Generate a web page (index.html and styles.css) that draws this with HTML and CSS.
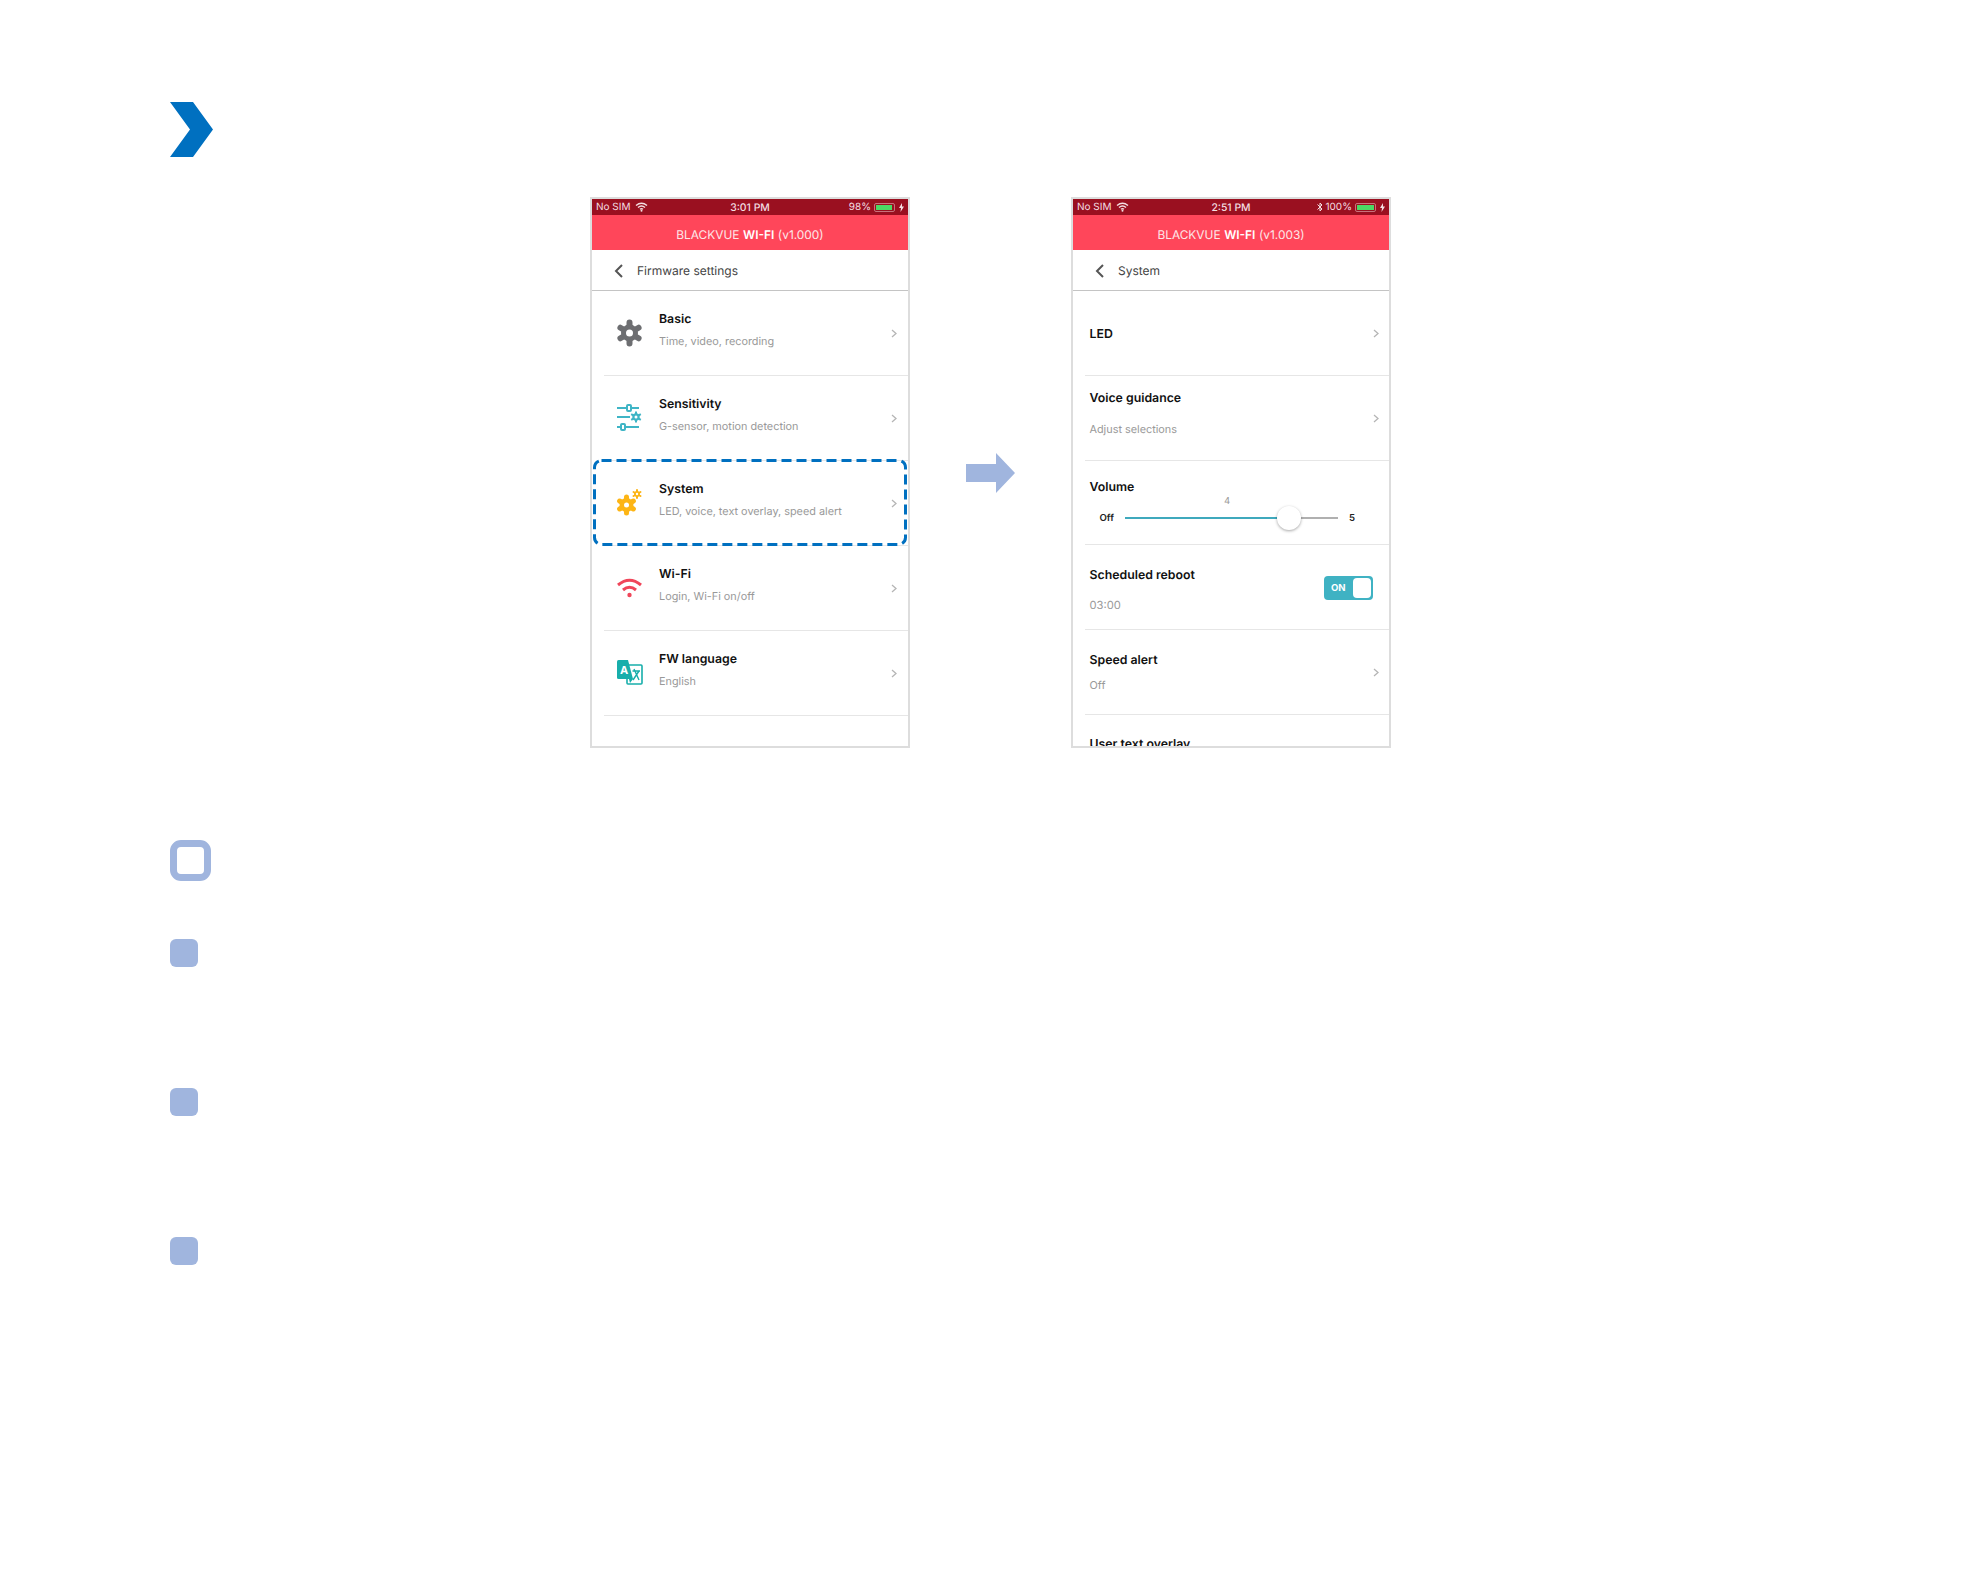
FILE: index.html
```html
<!DOCTYPE html>
<html>
 <head>
  <title>Firmware settings</title><meta charset="utf-8">
  <link rel="stylesheet" href="styles.css">
 </head>
 <body>
  <div class="page">
    <svg class="step-mark" width="43" height="55" viewBox="0 0 43 55"><path d="M0 0H23L43 27.500L23 55H0L20 27.500Z" fill="#0070c0"/></svg>

    <div class="compare">
      <div class="phone">
        <div class="status">
          <div class="status-side">
            <span>No SIM</span>
            <svg width="13" height="10" viewBox="0 0 13 10"><path d="M1 3.500Q6.500 -1 12 3.500M3 5.500Q6.500 2.500 10 5.500M5 7.300Q6.500 6 8 7.300" fill="none" stroke="#f4dfe2" stroke-width="1.400"/><circle cx="6.500" cy="8.800" r="1" fill="#f4dfe2"/></svg>
          </div>
          <span class="status-time">3:01 PM</span>
          <div class="status-side status-right">
            <span>98%</span>
            <div class="battery"><div class="battery-level level-98"></div></div>
            <svg width="5" height="9" viewBox="0 0 5 9"><path d="M3 0L0 5H2L1.500 9L5 3.500H3Z" fill="#f4dfe2"/></svg>
          </div>
        </div>
        <div class="app-title">BLACKVUE <b>WI-FI</b> (v1.000)</div>
        <div class="nav">
          <svg width="9" height="14" viewBox="0 0 9 14"><path d="M8 1L2 7L8 13" fill="none" stroke="#555" stroke-width="2"/></svg>
          <span>Firmware settings</span>
        </div>

        <div class="row menu-row">
          <svg class="row-icon" width="27" height="28" viewBox="0 0 27 28">
            <g stroke="#6d6e71" stroke-width="6" stroke-linecap="round"><path d="M13.500 3.500V24.500M4.400 8.750L22.600 19.250M4.400 19.250L22.600 8.750"/></g>
            <circle cx="13.500" cy="14" r="8.500" fill="#6d6e71"/><circle cx="13.500" cy="14" r="3.500" fill="#fff"/>
          </svg>
          <div class="row-text"><div class="row-title">Basic</div><div class="row-sub">Time, video, recording</div></div>
          <svg class="row-arrow" width="6" height="9" viewBox="0 0 6 9"><path d="M1 1L5 4.500L1 8" fill="none" stroke="#b5b5b5" stroke-width="1.300"/></svg>
        </div>
        <div class="row menu-row">
          <svg class="row-icon" width="27" height="28" viewBox="0 0 27 28">
            <g stroke="#3fb5c6" stroke-width="2" fill="#fff">
              <path d="M1 4H23M1 13H14M1 23H23"/>
              <rect x="11" y="1" width="4" height="6" rx="1"/><rect x="5" y="20" width="4" height="6" rx="1"/>
            </g>
            <g stroke="#3fb5c6" stroke-width="2"><path d="M20 7.500V18.500M15.200 10.200L24.800 15.800M15.200 15.800L24.800 10.200"/></g>
            <circle cx="20" cy="13" r="3.700" fill="#3fb5c6"/><circle cx="20" cy="13" r="1.500" fill="#fff"/>
          </svg>
          <div class="row-text"><div class="row-title">Sensitivity</div><div class="row-sub">G-sensor, motion detection</div></div>
          <svg class="row-arrow" width="6" height="9" viewBox="0 0 6 9"><path d="M1 1L5 4.500L1 8" fill="none" stroke="#b5b5b5" stroke-width="1.300"/></svg>
        </div>
        <div class="row menu-row">
          <svg class="row-icon" width="27" height="28" viewBox="0 0 27 28">
            <g stroke="#fdb515" stroke-width="5" stroke-linecap="round"><path d="M10.500 8V24M3.600 12L17.400 20M3.600 20L17.400 12"/></g>
            <circle cx="10.500" cy="16" r="7" fill="#fdb515"/><circle cx="10.500" cy="16" r="2.500" fill="#fff"/>
            <g stroke="#fdb515" stroke-width="2" stroke-linecap="round"><path d="M21 1V9M17.500 3L24.500 7M17.500 7L24.500 3"/></g>
            <circle cx="21" cy="5" r="3" fill="#fdb515"/><circle cx="21" cy="5" r="1.200" fill="#fff"/>
          </svg>
          <div class="row-text"><div class="row-title">System</div><div class="row-sub">LED, voice, text overlay, speed alert</div></div>
          <svg class="row-arrow" width="6" height="9" viewBox="0 0 6 9"><path d="M1 1L5 4.500L1 8" fill="none" stroke="#b5b5b5" stroke-width="1.300"/></svg>
          <svg class="highlight" width="314" height="87" viewBox="0 0 314 87"><rect x="1.500" y="1.500" width="311" height="84" rx="7" fill="none" stroke="#0070c0" stroke-width="3" stroke-dasharray="10 5"/></svg>
        </div>
        <div class="row menu-row">
          <svg class="row-icon" width="27" height="28" viewBox="0 0 27 28">
            <path d="M2 11Q13.500 1.500 25 11M7 16Q13.500 10.500 20 16" fill="none" stroke="#f0465a" stroke-width="3"/>
            <circle cx="13.500" cy="21" r="2.200" fill="#f0465a"/>
          </svg>
          <div class="row-text"><div class="row-title">Wi-Fi</div><div class="row-sub">Login, Wi-Fi on/off</div></div>
          <svg class="row-arrow" width="6" height="9" viewBox="0 0 6 9"><path d="M1 1L5 4.500L1 8" fill="none" stroke="#b5b5b5" stroke-width="1.300"/></svg>
        </div>
        <div class="row menu-row">
          <svg class="row-icon" width="27" height="28" viewBox="0 0 27 28">
            <rect x="11" y="6" width="15" height="19" rx="1" fill="#fff" stroke="#17aeab" stroke-width="1.600"/>
            <path d="M1 2.500Q1 1 2.500 1H12L17 20H2.500Q1 20 1 18.500Z" fill="#17aeab"/>
            <path d="M13 20L17 20L14 24Z" fill="#17aeab"/>
            <text class="icon-letter" x="4" y="15">A</text>
            <path d="M18 10L23 21M23 12L17 21M16.500 12H24" fill="none" stroke="#17aeab" stroke-width="1.400"/>
          </svg>
          <div class="row-text"><div class="row-title">FW language</div><div class="row-sub">English</div></div>
          <svg class="row-arrow" width="6" height="9" viewBox="0 0 6 9"><path d="M1 1L5 4.500L1 8" fill="none" stroke="#b5b5b5" stroke-width="1.300"/></svg>
        </div>
      </div>

      <svg class="flow-arrow" width="49" height="40" viewBox="0 0 49 40"><path d="M0 11H30V0L49 20L30 40V29H0Z" fill="#a0b5de"/></svg>

      <div class="phone">
        <div class="status">
          <div class="status-side">
            <span>No SIM</span>
            <svg width="13" height="10" viewBox="0 0 13 10"><path d="M1 3.500Q6.500 -1 12 3.500M3 5.500Q6.500 2.500 10 5.500M5 7.300Q6.500 6 8 7.300" fill="none" stroke="#f4dfe2" stroke-width="1.400"/><circle cx="6.500" cy="8.800" r="1" fill="#f4dfe2"/></svg>
          </div>
          <span class="status-time">2:51 PM</span>
          <div class="status-side status-right">
            <svg width="6" height="10" viewBox="0 0 6 10"><path d="M0.500 2.500L5 7L3 9V1L5 3L0.500 7.500" fill="none" stroke="#f4dfe2" stroke-width="1"/></svg>
            <span>100%</span>
            <div class="battery"><div class="battery-level level-100"></div></div>
            <svg width="5" height="9" viewBox="0 0 5 9"><path d="M3 0L0 5H2L1.500 9L5 3.500H3Z" fill="#f4dfe2"/></svg>
          </div>
        </div>
        <div class="app-title">BLACKVUE <b>WI-FI</b> (v1.003)</div>
        <div class="nav">
          <svg width="9" height="14" viewBox="0 0 9 14"><path d="M8 1L2 7L8 13" fill="none" stroke="#555" stroke-width="2"/></svg>
          <span>System</span>
        </div>

        <div class="row setting-row">
          <div class="row-text led"><div class="row-title">LED</div></div>
          <svg class="row-arrow" width="6" height="9" viewBox="0 0 6 9"><path d="M1 1L5 4.500L1 8" fill="none" stroke="#b5b5b5" stroke-width="1.300"/></svg>
        </div>
        <div class="row setting-row">
          <div class="row-text voice"><div class="row-title">Voice guidance</div><div class="row-sub">Adjust selections</div></div>
          <svg class="row-arrow" width="6" height="9" viewBox="0 0 6 9"><path d="M1 1L5 4.500L1 8" fill="none" stroke="#b5b5b5" stroke-width="1.300"/></svg>
        </div>
        <div class="row setting-row short">
          <div class="row-text volume">
            <div class="row-title">Volume</div>
            <div class="slider">
              <span class="slider-end">Off</span>
              <div class="slider-track">
                <div class="slider-fill" style="width: 164px"></div>
                <div class="slider-value">4</div>
                <div class="slider-thumb"></div>
              </div>
              <span class="slider-end">5</span>
            </div>
          </div>
        </div>
        <div class="row setting-row">
          <div class="row-text reboot"><div class="row-title">Scheduled reboot</div><div class="row-sub">03:00</div></div>
          <div class="toggle"><span>ON</span><div class="toggle-knob"></div></div>
        </div>
        <div class="row setting-row">
          <div class="row-text speed"><div class="row-title">Speed alert</div><div class="row-sub">Off</div></div>
          <svg class="row-arrow" width="6" height="9" viewBox="0 0 6 9"><path d="M1 1L5 4.500L1 8" fill="none" stroke="#b5b5b5" stroke-width="1.300"/></svg>
        </div>
        <div class="row setting-row">
          <div class="row-text overlay"><div class="row-title">User text overlay</div></div>
        </div>
      </div>
    </div>

    <div class="note-box"></div>
    <div class="bullets">
      <div class="bullet"></div>
      <div class="bullet"></div>
      <div class="bullet"></div>
    </div>
  </div>
 </body>
</html>
```

FILE: styles.css
```css
body {
  margin: 0;
  background-color: #fff;
  font-family: "Inter", "Liberation Sans", sans-serif;
  text-rendering: geometricPrecision;
}

.page {
  height: 1587px;
  box-sizing: border-box;
  padding: 102px 0 0 170px;
}

.step-mark {
  display: block;
}

.compare {
  display: flex;
  align-items: center;
  margin: 40px 0 0 420px;
}

.flow-arrow {
  margin: 0 56px;
}

.phone {
  width: 320px;
  height: 551px;
  box-sizing: border-box;
  border: 2px solid #ddd;
  overflow: hidden;
}

.status {
  height: 16px;
  padding: 0 4px;
  display: flex;
  align-items: center;
  justify-content: space-between;
  background-color: #9a1020;
  color: #f4dfe2;
  font-size: 10px;
  position: relative;
}

.status-side {
  display: flex;
  align-items: center;
  gap: 5px;
}

.status-right {
  gap: 2px;
}

.status-time {
  position: absolute;
  left: 0;
  right: 0;
  text-align: center;
  font-size: 10.400px;
  font-weight: 500;
}

.battery {
  width: 21px;
  height: 9px;
  box-sizing: border-box;
  margin: 0 2px 0 1px;
  border: 1px solid #c9717b;
  border-radius: 2px;
  padding: 1px;
}

.battery-level {
  height: 100%;
  background-color: #4cd964;
}

.level-98 {
  width: 96%;
}

.level-100 {
  width: 100%;
}

.app-title {
  height: 35px;
  box-sizing: border-box;
  padding-top: 3px;
  display: flex;
  align-items: center;
  justify-content: center;
  gap: 0.3em;
  background-color: #ff465a;
  color: #fde6e8;
  font-size: 11.900px;
}

.app-title b {
  font-weight: 600;
  color: #fff;
}

.nav {
  height: 41px;
  box-sizing: border-box;
  padding: 1px 0 0 22px;
  display: flex;
  align-items: center;
  gap: 14px;
  border-bottom: 1px solid #c4c4c4;
  color: #444;
  font-size: 12px;
}

.row {
  height: 85px;
  box-sizing: border-box;
  margin-left: 12px;
  display: flex;
  align-items: center;
  border-bottom: 1px solid #e6e6e6;
  position: relative;
}

.setting-row {
  padding-left: 4.500px;
}

.setting-row.short {
  height: 84px;
}

.setting-row .row-arrow {
  margin-right: 10px;
}

.menu-row {
  padding-left: 12px;
}

.row-icon {
  flex-shrink: 0;
  margin-right: 16px;
}

.row-text {
  flex-grow: 1;
  align-self: flex-start;
  padding-top: 20px;
}

.row-title {
  font-size: 12.300px;
  line-height: 16px;
  font-weight: 600;
  color: #111;
}

.row-sub {
  margin-top: 6px;
  font-size: 10.850px;
  line-height: 17px;
  color: #999;
}

.row-arrow {
  flex-shrink: 0;
  margin-right: 11px;
}

.highlight {
  position: absolute;
  left: -11px;
  top: -2px;
  z-index: 1;
}

.led {
  padding-top: 35px;
}

.voice {
  padding-top: 14px;
}

.voice .row-sub {
  margin-top: 15px;
}

.volume {
  padding-top: 18px;
}

.reboot {
  padding-top: 22px;
}

.reboot .row-sub {
  margin-top: 14px;
  font-size: 11.200px;
  line-height: 16px;
}

.speed {
  padding-top: 22px;
}

.speed .row-sub {
  margin-top: 9px;
}

.overlay {
  padding-top: 21px;
}

.slider {
  display: flex;
  align-items: center;
  margin: 15px 0 0 10px;
  height: 16px;
  width: 256px;
}

.slider-end {
  font-size: 9.600px;
  font-weight: 600;
  color: #222;
}

.slider-track {
  width: 213px;
  height: 2px;
  margin: 0 11px 0 11px;
  background-color: #b0b0b0;
  position: relative;
}

.slider-fill {
  height: 100%;
  background-color: #3fa9bd;
}

.slider-value {
  position: absolute;
  left: 99px;
  top: -22px;
  font-size: 9.500px;
  line-height: 14px;
  color: #999;
}

.slider-thumb {
  position: absolute;
  left: 152px;
  top: -11px;
  width: 24px;
  height: 24px;
  border-radius: 50%;
  background-color: #fff;
  box-shadow: 0 1px 3px rgba(0, 0, 0, 0.35);
}

.toggle {
  width: 49px;
  height: 24px;
  box-sizing: border-box;
  flex-shrink: 0;
  margin: 2px 16px 0 0;
  padding: 2px 2px 2px 7px;
  display: flex;
  align-items: center;
  justify-content: space-between;
  border-radius: 4px;
  background-color: #3fb2c3;
  color: #fff;
  font-size: 9.500px;
  font-weight: 700;
}

.toggle-knob {
  width: 18px;
  height: 20px;
  border-radius: 4px;
  background-color: #fff;
}

.icon-letter {
  font-size: 11px;
  font-weight: 700;
  fill: #fff;
}

.note-box {
  width: 41px;
  height: 41px;
  box-sizing: border-box;
  margin-top: 92px;
  border: 7px solid #a0b5de;
  border-radius: 11px;
}

.bullets {
  margin-top: 58px;
  display: flex;
  flex-direction: column;
  gap: 121px;
}

.bullet {
  width: 28px;
  height: 28px;
  border-radius: 6px;
  background-color: #a0b5de;
}
```
